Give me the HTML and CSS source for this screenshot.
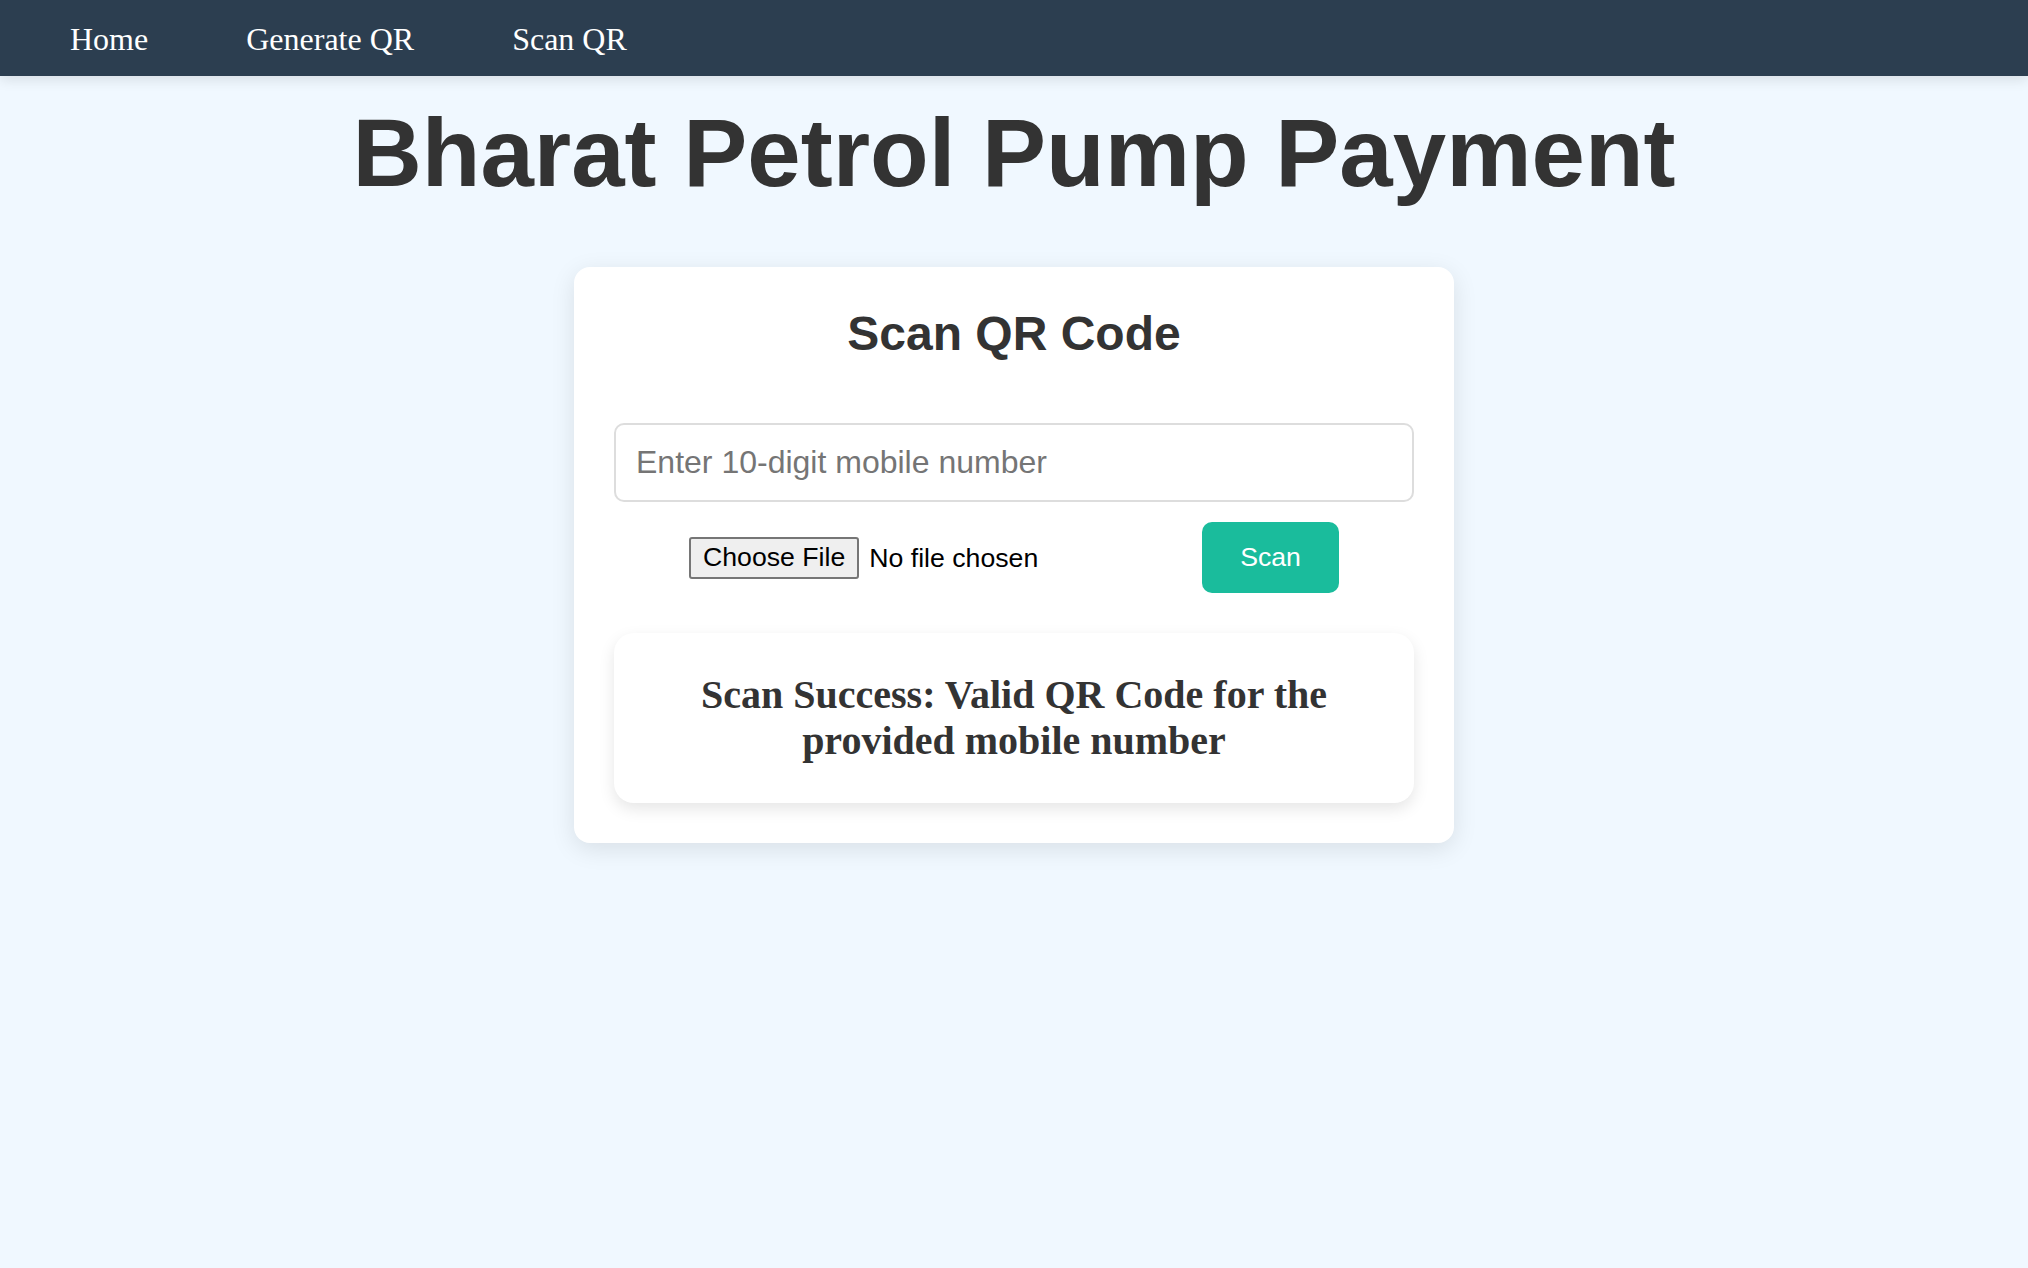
FILE: index.html
```html
<!DOCTYPE html>
<html lang="en">
<head>
<meta charset="utf-8">
<title>Bharat Petrol Pump Payment</title>
<link rel="stylesheet" href="styles.css">
</head>
<body>
<nav class="navbar">
  <a class="nav-link" href="#">Home</a>
  <a class="nav-link" href="#">Generate QR</a>
  <a class="nav-link" href="#">Scan QR</a>
</nav>
<h1 class="page-title">Bharat Petrol Pump Payment</h1>
<main class="card">
  <h2 class="card-title">Scan QR Code</h2>
  <input class="mobile-input" type="text" placeholder="Enter 10-digit mobile number">
  <div class="scan-row">
    <input class="file-input" type="file">
    <button class="scan-btn" type="button">Scan</button>
  </div>
  <div class="result">
    <h3 class="result-text">Scan Success: Valid QR Code for the provided mobile number</h3>
  </div>
</main>
</body>
</html>
```

FILE: styles.css
```css
* { box-sizing: border-box; }

html, body {
  margin: 0;
  padding: 0;
}

body {
  background: #f0f8ff;
  font-family: "Liberation Serif", "Times New Roman", serif;
  min-height: 1268px;
}

.navbar {
  height: 76px;
  background: #2c3e50;
  display: flex;
  align-items: center;
  padding-left: 30px;
  padding-top: 2px;
  box-shadow: 0 4px 12px rgba(0, 0, 0, 0.1);
  position: relative;
}

.nav-link {
  font-family: "Liberation Serif", "Times New Roman", serif;
  font-size: 32px;
  color: #ffffff;
  text-decoration: none;
  padding: 0 40px;
  margin-right: 18px;
  line-height: 37px;
}

.page-title {
  font-family: "Liberation Sans", Arial, sans-serif;
  font-weight: bold;
  font-size: 96px;
  line-height: 110px;
  color: #333333;
  text-align: center;
  margin: 22px 0 0 0;
}

.card {
  width: 880px;
  margin: 59px auto 0 auto;
  background: #ffffff;
  border-radius: 16px;
  padding: 39px 40px 40px 40px;
  box-shadow: 0 6px 24px rgba(0, 0, 0, 0.1);
}

.card-title {
  font-family: "Liberation Sans", Arial, sans-serif;
  font-weight: bold;
  font-size: 48px;
  line-height: 55px;
  color: #333333;
  text-align: center;
  margin: 0 0 62px 0;
}

.mobile-input {
  display: block;
  width: 800px;
  height: 79px;
  border: 2px solid #dddddd;
  border-radius: 10px;
  padding: 0 20px;
  font-family: "Liberation Sans", Arial, sans-serif;
  font-size: 32px;
  color: #333333;
  background: #ffffff;
  outline: none;
}

.mobile-input::placeholder {
  color: #757575;
}

.scan-row {
  margin-top: 20px;
  height: 71px;
  display: flex;
  align-items: center;
  justify-content: space-around;
}

.file-input {
  width: 363px;
  font-family: "Liberation Sans", Arial, sans-serif;
  font-size: 26.67px;
  color: #000000;
  line-height: 30px;
}

.file-input::file-selector-button {
  font-family: "Liberation Sans", Arial, sans-serif;
  font-size: 26.67px;
  height: 42px;
  padding: 0 12px;
  margin-right: 10px;
  background: #efefef;
  color: #000000;
  border: 2px solid #767676;
  border-radius: 3px;
}

.scan-btn {
  height: 71px;
  padding: 0 38px;
  background: #1abc9c;
  color: #ffffff;
  border: none;
  border-radius: 10px;
  font-family: "Liberation Sans", Arial, sans-serif;
  font-size: 26.67px;
}

.result {
  margin-top: 40px;
  background: #ffffff;
  border-radius: 20px;
  padding: 39px 40px;
  box-shadow: 0 6px 16px rgba(0, 0, 0, 0.1);
}

.result-text {
  margin: 0;
  font-family: "Liberation Serif", "Times New Roman", serif;
  font-weight: bold;
  font-size: 40px;
  line-height: 46px;
  color: #333333;
  text-align: center;
}
```
